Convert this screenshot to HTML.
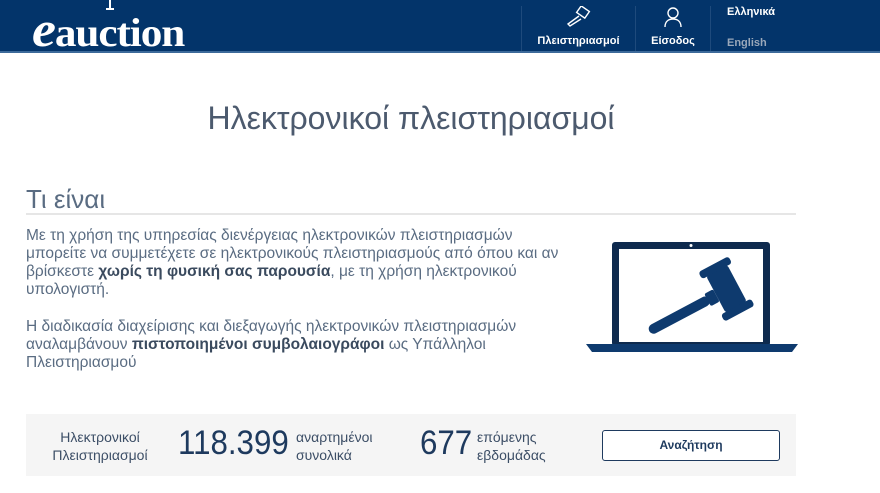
<!DOCTYPE html>
<html><head><meta charset="utf-8"><style>
*{margin:0;padding:0;box-sizing:border-box}
body{width:880px;height:493px;overflow:hidden;background:#fff;font-family:"Liberation Sans",sans-serif;position:relative}
.hdr{position:absolute;left:0;top:0;width:880px;height:53px;background:#03346a;border-bottom:2px solid #3d6a9a}
.logo{position:absolute;left:32px;top:0px;color:#fff;font-family:"Liberation Serif",serif;font-size:40px;font-weight:bold;letter-spacing:-1px;transform:scaleX(1.08);transform-origin:left}
.logo i{font-size:50px}
.nav{position:absolute;top:6px;height:45px;border-left:1px solid #1e4a7c;color:#fff;font-size:11px;font-weight:bold;text-align:center}
.a{position:absolute;white-space:nowrap}
.txt{color:#5a6c82;font-size:15.5px;line-height:18px}
.txt b{color:#3a4a5e}
</style></head><body>
<div class="hdr">
 <div class="logo"><i>e</i>auction</div>
 <svg style="position:absolute;left:102px;top:0" width="16" height="12"><path d="M8 0v9M4 9h8" stroke="#fff" stroke-width="2"/></svg>
 <div class="nav" style="left:521px;width:114px"><svg width="30" height="22" viewBox="0 0 30 22"><g fill="none" stroke="#fff" stroke-width="1.4"><rect x="14" y="2" width="10" height="8" transform="rotate(35 19 6)"/><path d="M15 10L4 18l2 2 11-7"/></g></svg><div style="margin-top:4px">Πλειστηριασμοί</div></div>
 <div class="nav" style="left:635px;width:75px"><svg width="22" height="22" viewBox="0 0 22 22"><g fill="none" stroke="#fff" stroke-width="1.4"><circle cx="11" cy="7" r="5"/><path d="M3 21c0-6 4-8 8-8s8 2 8 8"/></g></svg><div style="margin-top:4px">Είσοδος</div></div>
 <div class="nav" style="left:710px;width:80px;text-align:left;padding-left:16px">Ελληνικά<div style="color:#9aa8ba;margin-top:19px">English</div></div>
</div>
<div class="a" style="left:0;width:822px;text-align:center;top:100px;font-size:32px;color:#4c5a6e">Ηλεκτρονικοί πλειστηριασμοί</div>
<div class="a" style="left:26px;top:184px;font-size:26px;color:#5a6c82">Τι είναι</div>
<div class="a" style="left:26px;top:213px;width:770px;height:2px;background:#e6e6e6"></div>
<div class="a txt" style="left:26px;top:227px">Με τη χρήση της υπηρεσίας διενέργειας ηλεκτρονικών πλειστηριασμών<br>μπορείτε να συμμετέχετε σε ηλεκτρονικούς πλειστηριασμούς από όπου και αν<br>βρίσκεστε <b>χωρίς τη φυσική σας παρουσία</b>, με τη χρήση ηλεκτρονικού<br>υπολογιστή.</div>
<div class="a txt" style="left:26px;top:318px">Η διαδικασία διαχείρισης και διεξαγωγής ηλεκτρονικών πλειστηριασμών<br>αναλαμβάνουν <b>πιστοποιημένοι συμβολαιογράφοι</b> ως Υπάλληλοι<br>Πλειστηριασμού</div>
<svg class="a" style="left:586px;top:238px" width="212" height="116" viewBox="0 0 212 116">
 <rect x="26" y="4" width="158" height="104" rx="3" fill="#0e2a4e"/>
 <rect x="33" y="11" width="144" height="93" fill="#fff"/>
 <circle cx="105" cy="7.5" r="1.5" fill="#fff"/>
 <path d="M0 106h212l-6 8H6z" fill="#0e3a6e"/>
 <g fill="#0e3a6e" transform="rotate(-28 120 55)">
  <rect x="52" y="57" width="68" height="10" rx="5"/>
  <rect x="118" y="55" width="10" height="14" rx="2"/>
  <rect x="128" y="40" width="24" height="42" rx="3"/>
  <rect x="123" y="33" width="34" height="8" rx="3"/>
  <rect x="123" y="81" width="34" height="8" rx="3"/>
 </g>
</svg>
<div class="a" style="left:26px;top:414px;width:770px;height:62px;background:#f5f5f5"></div>
<div class="a" style="left:40px;top:428px;width:120px;text-align:center;font-size:14px;line-height:18px;color:#3c4e66">Ηλεκτρονικοί<br>Πλειστηριασμοί</div>
<div class="a" style="left:178px;top:424px;font-size:34px;color:#1e3a5e;transform:scaleX(0.92);transform-origin:left">118.399</div>
<div class="a" style="left:296px;top:428px;font-size:14px;line-height:18px;color:#3c4e66">αναρτημένοι<br>συνολικά</div>
<div class="a" style="left:420px;top:424px;font-size:34px;color:#1e3a5e;transform:scaleX(0.92);transform-origin:left">677</div>
<div class="a" style="left:477px;top:428px;font-size:14px;line-height:18px;color:#3c4e66">επόμενης<br>εβδομάδας</div>
<div class="a" style="left:602px;top:430px;width:178px;height:31px;border:1.5px solid #1e3a5e;border-radius:3px;background:#fff;text-align:center;line-height:28px;font-size:12px;font-weight:bold;color:#1e3a5e">Αναζήτηση</div>
</body></html>
